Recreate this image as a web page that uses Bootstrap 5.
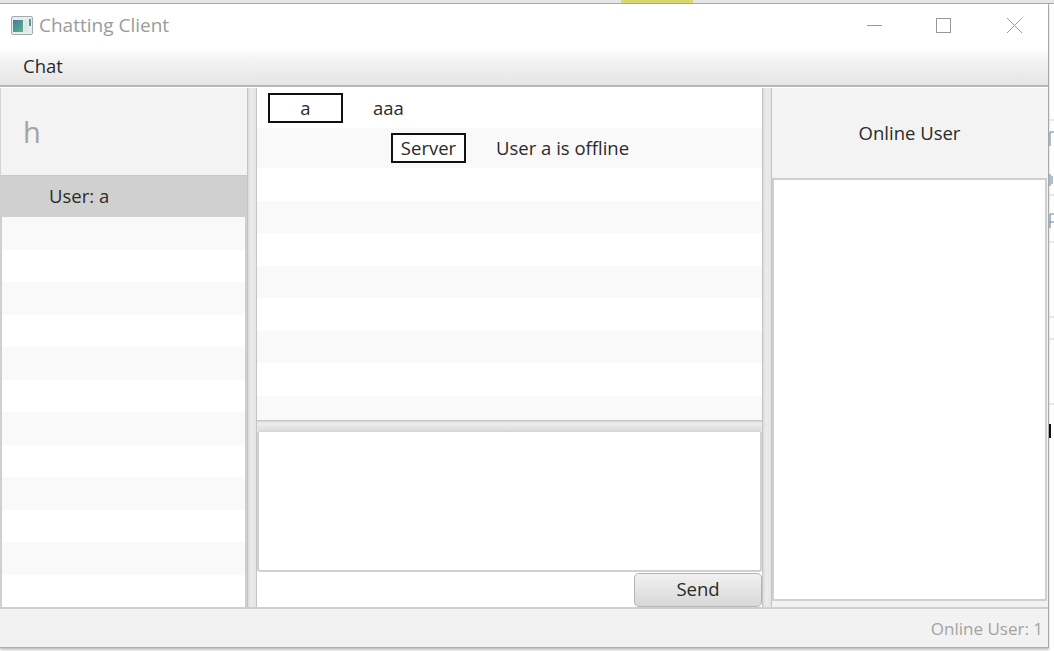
<!DOCTYPE html>
<html lang="en">
<head>
  <meta charset="UTF-8" />
  <meta name="viewport" content="width=device-width, initial-scale=1.0" />
  <title>Chatting Client</title>
  <link href="https://cdn.jsdelivr.net/npm/bootstrap@5.3.3/dist/css/bootstrap.min.css" rel="stylesheet" />
  <style>
    html, body { height: 100%; overflow: hidden; }
    body { font-family: "Open Sans", "Noto Sans", sans-serif; font-size: 18.5px; color: #2a2a2a; background: #fff; }
    .desk-top { height: 4px; background: #e6e6e6; border-bottom: 1px solid #a8a8a8; }
    .desk-top-gap { width: 621px; }
    .desk-top-note { width: 72px; background: #d8d873; }
    .desk-shell { height: 644px; }
    .app-win { width: 1049px; border-right: 1px solid #a8a8a8; border-bottom: 1px solid #b0b0b0; box-shadow: 0 2px 2px #c4c4c4; }
    .desk-side { width: 5px; }
    .title-strip { height: 45px; flex: none; background: #fff; padding: 0 0 2px 11px; }
    .title-text { color: #9b9b9b; margin-left: 6px; font-size: 19px; line-height: 1; }
    .win-btn { width: 15px; height: 15px; display: block; }
    .btn-min { margin-right: 54px; }
    .btn-max { margin-right: 56px; }
    .title-right { margin-right: 26px; }
    .menu-strip { height: 38px; flex: none; padding: 0 0 2px 23px; background: linear-gradient(#fdfdfd, #f3f3f3 30%, #e5e5e5); border-bottom: 2px solid #b8b8b8; }
    .panes { flex: 1 1 0; min-height: 0; padding-top: 1px; }
    .pane-left { width: 247px; flex: none; }
    .pane-head { background: #f3f3f3; }
    .pane-head-left { height: 88px; flex: none; padding-left: 22px; font-size: 29px; color: #a3a3a3; border-left: 1px solid #d4d4d4; border-bottom: 1px solid #c8c8c8; }
    .side-list { border: 2px solid #cfcfcf; border-top-width: 1px; border-bottom: 0; overflow: hidden; }
    .row-picked { height: 40px; flex: none; background: #d0d0d0; padding: 0 0 2px 47px; }
    .row-plain { height: 32.5px; flex: none; }
    .row-tint { background: #f9f9f9; }
    .split-v { width: 10px; flex: none; background: linear-gradient(90deg, #dcdcdc, #ececec 40%, #e4e4e4); border-left: 1px solid #c4c4c4; border-right: 1px solid #c4c4c4; }
    .pane-mid { width: 505px; flex: none; }
    .msg-list { height: 332px; flex: none; overflow: hidden; }
    .msg-row { height: 40px; flex: none; }
    .sender-box { width: 75px; height: 30px; border: 2px solid #111; background: #fff; }
    .msg-a { padding-left: 11px; }
    .msg-a .msg-text { margin-left: 30px; }
    .msg-b { padding-left: 134px; }
    .msg-b .msg-text { margin-left: 30px; }
    .split-h { height: 10px; flex: none; background: linear-gradient(#d8d8d8, #eeeeee 30%, #dedede); border-top: 1px solid #c4c4c4; }
    .input-box { height: 142px; flex: none; width: 505px; border: 2px solid #d0d0d0; border-top-color: #d8d8d8; border-radius: 3px; resize: none; outline: none; background: #fff; }
    .send-row { height: 35px; flex: none; }
    .send-btn { width: 128px; height: 34px; padding: 0 0 2px; font-size: 18.5px; color: #2a2a2a; border: 1px solid #b4b4b4; border-radius: 5px; background: linear-gradient(#f1f1f1, #d8d8d8); }
    .pane-right { flex: 1 1 0; min-width: 0; padding-right: 1px; background: #f2f2f2; }
    .pane-head-right { height: 90px; flex: none; }
    .online-list { height: 423px; flex: none; background: #fff; border: 2px solid #cfcfcf; }
    .status-strip { height: 40px; flex: none; background: #f2f2f2; border-top: 2px solid #cfcfcf; padding: 1px 5px 0 0; color: #a3a3a3; font-size: 17px; }
  </style>
</head>
<body>
  <!-- Desktop behind the window -->
  <div class="desk-top d-flex">
    <div class="desk-top-gap"></div>
    <div class="desk-top-note"></div>
  </div>

  <div class="desk-shell d-flex">
    <div class="app-win d-flex flex-column">
      <!-- Title bar -->
      <div class="title-strip d-flex align-items-center">
        <svg width="22" height="19" viewBox="0 0 22 19">
          <defs>
            <linearGradient id="appIco" x1="0" y1="0" x2="1" y2="1">
              <stop offset="0" stop-color="#3f7f9f" />
              <stop offset="1" stop-color="#5fae8c" />
            </linearGradient>
          </defs>
          <rect x="0.5" y="0.5" width="21" height="18" rx="1.5" fill="#e8eeee" stroke="#a4acac" />
          <rect x="2" y="4" width="10" height="12" fill="url(#appIco)" />
          <rect x="13" y="4" width="4" height="12" fill="#dfe8e4" />
          <rect x="18" y="3" width="2" height="7" fill="#4f9f8f" />
        </svg>
        <span class="title-text">Chatting Client</span>
        <div class="title-right ms-auto d-flex align-items-center">
          <svg class="win-btn btn-min" viewBox="0 0 15 15"><path d="M0 7.5H15" stroke="#999" fill="none" /></svg>
          <svg class="win-btn btn-max" viewBox="0 0 15 15"><rect x="0.5" y="0.5" width="14" height="14" stroke="#999" fill="none" /></svg>
          <svg class="win-btn" viewBox="0 0 15 15"><path d="M0 0L15 15M15 0L0 15" stroke="#999" fill="none" /></svg>
        </div>
      </div>

      <!-- Menu -->
      <div class="menu-strip d-flex align-items-center">Chat</div>

      <div class="panes d-flex">
        <!-- Left: current user -->
        <div class="pane-left d-flex flex-column">
          <div class="pane-head pane-head-left d-flex align-items-center">h</div>
          <div id="sideList" class="side-list d-flex flex-column flex-grow-1">
            <div class="row-picked d-flex align-items-center">User: a</div>
          </div>
        </div>
        <div class="split-v"></div>

        <!-- Middle: messages and input -->
        <div class="pane-mid d-flex flex-column">
          <div id="msgList" class="msg-list d-flex flex-column">
            <div class="msg-row msg-a d-flex align-items-center">
              <div class="sender-box d-flex align-items-center justify-content-center">a</div>
              <span class="msg-text">aaa</span>
            </div>
            <div class="msg-row msg-b row-tint d-flex align-items-center">
              <div class="sender-box d-flex align-items-center justify-content-center">Server</div>
              <span class="msg-text">User a is offline</span>
            </div>
          </div>
          <div class="split-h"></div>
          <textarea class="input-box d-block"></textarea>
          <div class="send-row d-flex align-items-center justify-content-end">
            <button type="button" class="btn send-btn">Send</button>
          </div>
        </div>
        <div class="split-v"></div>

        <!-- Right: online users -->
        <div class="pane-right d-flex flex-column">
          <div class="pane-head pane-head-right d-flex align-items-center justify-content-center">Online User</div>
          <div class="online-list"></div>
        </div>
      </div>

      <!-- Status bar -->
      <div class="status-strip d-flex align-items-center justify-content-end">Online User: 1</div>
    </div>

    <!-- Sliver of the window behind -->
    <svg class="desk-side" viewBox="0 0 5 644" height="644">
      <path d="M0 116H5M0 191H5M0 238H5M0 313H5M0 335H5M0 400H5" stroke="#d4d4d4" fill="none" />
      <path d="M1 128H5M1 128V142M1 170V182M3 172V180M1 210H5M1 218H5M1 210V224" stroke="#5f7fa8" fill="none" />
      <path d="M1 420V434" stroke="#111" stroke-width="2" fill="none" />
    </svg>
  </div>

  <script src="https://cdn.jsdelivr.net/npm/bootstrap@5.3.3/dist/js/bootstrap.bundle.min.js"></script>
  <script>
    // empty striped rows, same look as the JavaFX ListView
    function fillRows(id, count, startTinted) {
      const list = document.getElementById(id);
      for (let i = 0; i < count; i++) {
        const row = document.createElement('div');
        row.className = 'row-plain' + ((i % 2 === 0) === startTinted ? ' row-tint' : '');
        list.appendChild(row);
      }
    }

    fillRows('sideList', 12, true);
    fillRows('msgList', 8, false);
  </script>
</body>
</html>
